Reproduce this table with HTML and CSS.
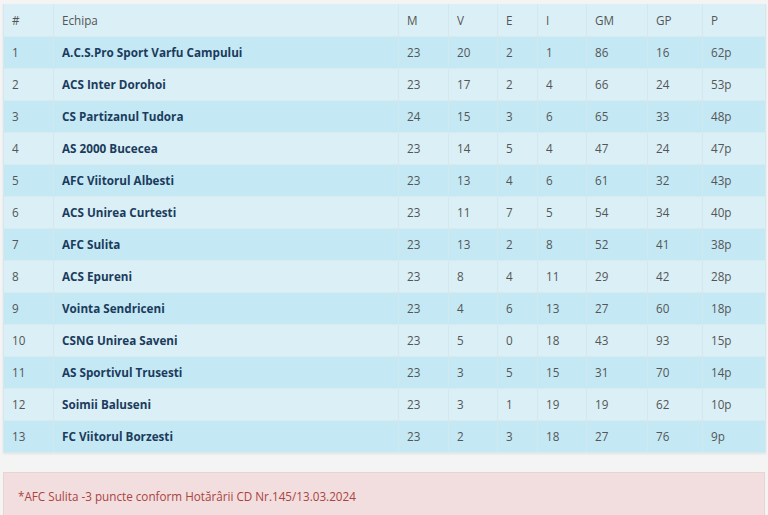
FILE: index.html
```html
<!DOCTYPE html>
<html lang="ro">
<head>
<meta charset="utf-8">
<title>Clasament</title>
<link rel="stylesheet" href="styles.css">
</head>
<body>
<div class="page">
<table class="standings">
<colgroup>
<col class="c-pos"><col class="c-team"><col class="c-m"><col class="c-v"><col class="c-e"><col class="c-i"><col class="c-gm"><col class="c-gp"><col class="c-p">
</colgroup>
<thead>
<tr><th>#</th><th>Echipa</th><th>M</th><th>V</th><th>E</th><th>I</th><th>GM</th><th>GP</th><th>P</th></tr>
</thead>
<tbody>
<tr><td>1</td><td class="team">A.C.S.Pro Sport Varfu Campului</td><td>23</td><td>20</td><td>2</td><td>1</td><td>86</td><td>16</td><td>62p</td></tr>
<tr><td>2</td><td class="team">ACS Inter Dorohoi</td><td>23</td><td>17</td><td>2</td><td>4</td><td>66</td><td>24</td><td>53p</td></tr>
<tr><td>3</td><td class="team">CS Partizanul Tudora</td><td>24</td><td>15</td><td>3</td><td>6</td><td>65</td><td>33</td><td>48p</td></tr>
<tr><td>4</td><td class="team">AS 2000 Bucecea</td><td>23</td><td>14</td><td>5</td><td>4</td><td>47</td><td>24</td><td>47p</td></tr>
<tr><td>5</td><td class="team">AFC Viitorul Albesti</td><td>23</td><td>13</td><td>4</td><td>6</td><td>61</td><td>32</td><td>43p</td></tr>
<tr><td>6</td><td class="team">ACS Unirea Curtesti</td><td>23</td><td>11</td><td>7</td><td>5</td><td>54</td><td>34</td><td>40p</td></tr>
<tr><td>7</td><td class="team">AFC Sulita</td><td>23</td><td>13</td><td>2</td><td>8</td><td>52</td><td>41</td><td>38p</td></tr>
<tr><td>8</td><td class="team">ACS Epureni</td><td>23</td><td>8</td><td>4</td><td>11</td><td>29</td><td>42</td><td>28p</td></tr>
<tr><td>9</td><td class="team">Vointa Sendriceni</td><td>23</td><td>4</td><td>6</td><td>13</td><td>27</td><td>60</td><td>18p</td></tr>
<tr><td>10</td><td class="team">CSNG Unirea Saveni</td><td>23</td><td>5</td><td>0</td><td>18</td><td>43</td><td>93</td><td>15p</td></tr>
<tr><td>11</td><td class="team">AS Sportivul Trusesti</td><td>23</td><td>3</td><td>5</td><td>15</td><td>31</td><td>70</td><td>14p</td></tr>
<tr><td>12</td><td class="team">Soimii Baluseni</td><td>23</td><td>3</td><td>1</td><td>19</td><td>19</td><td>62</td><td>10p</td></tr>
<tr><td>13</td><td class="team">FC Viitorul Borzesti</td><td>23</td><td>2</td><td>3</td><td>18</td><td>27</td><td>76</td><td>9p</td></tr>
</tbody>
</table>
<div class="note">*AFC Sulita -3 puncte conform Hotărârii CD Nr.145/13.03.2024</div>
</div>
</body>
</html>
```
FILE: styles.css
```css
html, body {
  margin: 0;
  padding: 0;
  background: #f4f4f4;
  font-family: "Open Sans", "Liberation Sans", sans-serif;
  font-size: 11.7px;
  color: #555;
}
.page {
  padding: 4px 3px 0 3px;
}
.standings {
  width: 762px;
  border-collapse: collapse;
  table-layout: fixed;
  box-shadow: 0 1px 2px rgba(0,0,0,0.08);
}
.c-pos { width: 50px; }
.c-team { width: 345px; }
.c-m { width: 50px; }
.c-v { width: 49px; }
.c-e { width: 40px; }
.c-i { width: 49px; }
.c-gm { width: 61px; }
.c-gp { width: 55px; }
.c-p { width: 63px; }
.standings th, .standings td {
  text-align: left;
  padding: 7px 8px;
  line-height: 17px;
  height: 17px;
  border: 1px solid #d3e8ee;
  border-top: 0;
  border-bottom: 1px solid #d6ebf0;
  font-weight: normal;
  white-space: nowrap;
}
.standings thead th {
  background: #daf0f6;
  color: #555;
  padding-top: 8px;
  padding-bottom: 7px;
}
.standings tbody tr:nth-child(odd) td {
  background: #c4e9f5;
}
.standings tbody tr:nth-child(even) td {
  background: #daf0f6;
}
.standings td.team {
  font-weight: bold;
  color: #1c3b5c;
}
.note {
  margin-top: 19px;
  width: 762px;
  box-sizing: border-box;
  background: #f2dede;
  border: 1px solid #ebd3d3;
  color: #a94442;
  padding: 15px 14px 20px;
  line-height: 17px;
}
```
